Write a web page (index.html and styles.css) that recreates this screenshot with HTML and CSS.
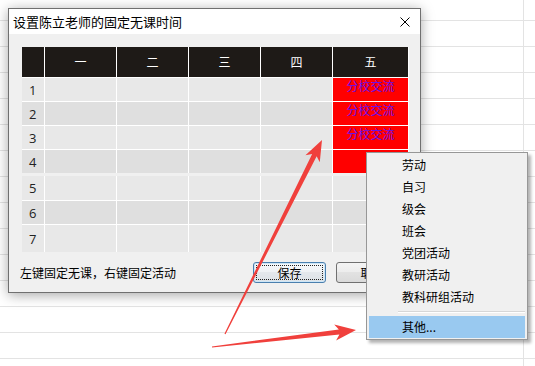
FILE: index.html
```html
<!DOCTYPE html>
<html lang="zh-CN">
<head>
    <meta charset="UTF-8">
    <title>设置陈立老师的固定无课时间</title>
    <link rel="stylesheet" href="styles.css">
</head>
<body>
    <div class="dialog">
        <div class="titlebar">
            <span class="title">设置陈立老师的固定无课时间</span>
            <svg class="close" width="10" height="10" viewBox="0 0 10 10">
                <path d="M0.5 0.5 L9.5 9.5 M9.5 0.5 L0.5 9.5" stroke="#000" stroke-width="1" fill="none"/>
            </svg>
        </div>

        <div class="dialog-body">
            <!-- morning block -->
            <div class="grid am">
                <div class="row head">
                    <div></div>
                    <div>一</div>
                    <div>二</div>
                    <div>三</div>
                    <div>四</div>
                    <div>五</div>
                </div>
                <div class="row">
                    <div class="num">1</div>
                    <div></div><div></div><div></div><div></div>
                    <div class="busy">分校交流</div>
                </div>
                <div class="row alt">
                    <div class="num">2</div>
                    <div></div><div></div><div></div><div></div>
                    <div class="busy">分校交流</div>
                </div>
                <div class="row">
                    <div class="num">3</div>
                    <div></div><div></div><div></div><div></div>
                    <div class="busy">分校交流</div>
                </div>
                <div class="row alt">
                    <div class="num">4</div>
                    <div></div><div></div><div></div><div></div>
                    <div class="busy"></div>
                </div>
            </div>

            <!-- afternoon block -->
            <div class="grid pm">
                <div class="row">
                    <div class="num">5</div>
                    <div></div><div></div><div></div><div></div><div></div>
                </div>
                <div class="row alt">
                    <div class="num">6</div>
                    <div></div><div></div><div></div><div></div><div></div>
                </div>
                <div class="row">
                    <div class="num">7</div>
                    <div></div><div></div><div></div><div></div><div></div>
                </div>
            </div>

            <div class="footer">
                <span class="hint">左键固定无课，右键固定活动</span>
                <div class="buttons">
                    <button class="btn default"><span class="focus">保存</span></button>
                    <button class="btn">取消</button>
                </div>
            </div>
        </div>
    </div>

    <div class="context-menu">
        <div class="menu-item">劳动</div>
        <div class="menu-item">自习</div>
        <div class="menu-item">级会</div>
        <div class="menu-item">班会</div>
        <div class="menu-item">党团活动</div>
        <div class="menu-item">教研活动</div>
        <div class="menu-item">教科研组活动</div>
        <div class="menu-sep"></div>
        <div class="menu-item active">其他...</div>
    </div>

    <svg class="arrows" width="535" height="366" viewBox="0 0 535 366">
        <polygon points="224.46,333.73 312.16,154.08 305.45,155.20 322,140 319.77,162.36 316.64,156.32 225.54,334.27"/>
        <polygon points="211.93,346.40 338.83,329.51 334.20,324.51 356,330 336.08,340.41 339.41,334.47 212.07,347.60"/>
    </svg>
</body>
</html>
```

FILE: styles.css
```css
* {
    margin: 0;
    padding: 0;
    box-sizing: border-box;
}

body {
    width: 535px;
    height: 366px;
    overflow: hidden;
    position: relative;
    font-family: "Noto Sans CJK SC", "Noto Sans", sans-serif;
    font-size: 12px;
    color: #000;
    background-color: #fff;
    background-image:
        linear-gradient(to right, transparent 523px, #e3e3e3 523px, #e3e3e3 524px, transparent 524px),
        repeating-linear-gradient(to bottom, #fff 0, #fff 20px, #e3e3e3 20px, #e3e3e3 21px, #fff 21px, #fff 26px);
}

/* dialog window */
.dialog {
    position: absolute;
    left: 8px;
    top: 8px;
    width: 413px;
    height: 285px;
    border: 1px solid #707070;
    background: #f0f0f0;
    box-shadow: 0 2px 12px rgba(0,0,0,0.35);
    display: flex;
    flex-direction: column;
}

.titlebar {
    height: 25px;
    background: #fff;
    display: flex;
    align-items: center;
    justify-content: space-between;
    padding: 0 10px 0 4px;
}

.title {
    font-size: 13px;
    line-height: 16px;
    margin-top: 1px;
}

.close {
    display: block;
    margin-top: 1px;
}

.dialog-body {
    flex: 1;
    padding: 13px 11px 0 13px;
}

/* timetable */
.grid {
    display: grid;
    grid-template-columns: 22px repeat(4, 71px) 75px;
    gap: 1px;
    background: #fff;
}

.grid.am {
    grid-template-rows: 30px repeat(4, 23px);
}

.grid.pm {
    margin-top: 3px;
    grid-template-rows: 24px 23px 27px;
}

.row {
    display: contents;
}

.row > div {
    background: #e8e8e8;
}

.row.alt > div {
    background: #dfdfdf;
}

.row.head > div {
    background: #1e1a17;
    color: #fff;
    text-align: center;
    line-height: 30px;
}

.row > .num {
    font-family: "Open Sans", "Noto Sans", sans-serif;
    font-size: 13px;
    color: #222;
    padding-left: 7px;
    display: flex;
    align-items: center;
}

.row > .busy,
.row.alt > .busy {
    background: #ff0000;
    color: #6a10e8;
    text-align: center;
    line-height: 14px;
    padding-top: 1px;
}

.footer {
    display: flex;
    justify-content: space-between;
    align-items: center;
    margin-top: 10px;
}

.hint {
    margin-left: -2px;
    line-height: 16px;
}

.buttons {
    display: flex;
    gap: 10px;
}

.btn {
    width: 73px;
    height: 21px;
    font-family: inherit;
    font-size: 12px;
    color: #000;
    border: 1px solid #707070;
    border-radius: 3px;
    background: linear-gradient(#f4f4f4 0%, #ececec 50%, #e2e2e2 50%, #dadada 100%);
    display: flex;
    align-items: center;
    justify-content: center;
}

.btn.default {
    border-color: #4a7fae;
    box-shadow: inset 0 0 0 1px #cde6f7;
    background: linear-gradient(#f6f8fa 0%, #eef1f4 50%, #e4e8ec 50%, #dde2e7 100%);
    padding: 2px;
}

.btn .focus {
    display: flex;
    align-items: center;
    justify-content: center;
    width: 100%;
    height: 100%;
    border: 1px dotted #222;
}

/* right-click menu */
.context-menu {
    position: absolute;
    left: 366px;
    top: 152px;
    width: 162px;
    height: 188px;
    background: #f0f0f0;
    border: 1px solid #979797;
    box-shadow: 3px 3px 3px rgba(0,0,0,0.3);
    padding: 1px 2px;
}

.menu-item {
    height: 22px;
    line-height: 22px;
    padding-left: 33px;
}

.menu-item.active {
    background: #99c9f0;
}

.menu-sep {
    height: 8px;
    margin-left: 29px;
    background: linear-gradient(to bottom, transparent 3px, #d7d7d7 3px, #d7d7d7 4px, #fff 4px, #fff 5px, transparent 5px);
}

.arrows {
    position: absolute;
    left: 0;
    top: 0;
    pointer-events: none;
}

.arrows polygon {
    fill: #f0403c;
}
```
